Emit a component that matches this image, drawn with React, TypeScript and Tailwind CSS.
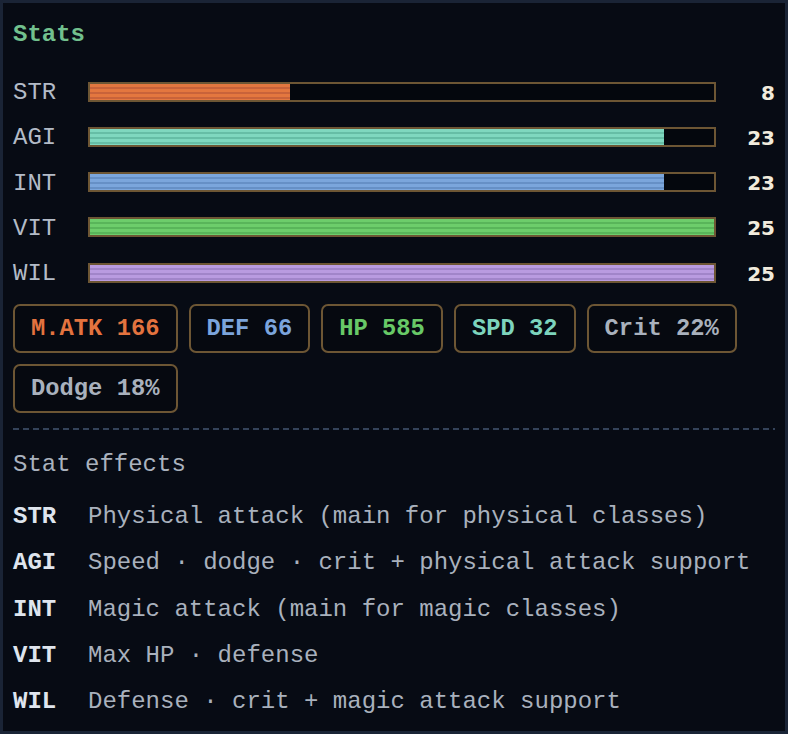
import React from "react";

const mono = { fontFamily: '"Courier New", "Liberation Mono", monospace' };

type Stat = { k: string; v: number; fill: string };

const stats: Stat[] = [
  { k: "STR", v: 8, fill: "bg-[repeating-linear-gradient(to_bottom,#e3773f_0px,#e3773f_3px,#c8633a_3px,#c8633a_5px)]" },
  { k: "AGI", v: 23, fill: "bg-[repeating-linear-gradient(to_bottom,#7fd8bf_0px,#7fd8bf_3px,#66bea6_3px,#66bea6_5px)]" },
  { k: "INT", v: 23, fill: "bg-[repeating-linear-gradient(to_bottom,#7ba6dc_0px,#7ba6dc_3px,#6690c6_3px,#6690c6_5px)]" },
  { k: "VIT", v: 25, fill: "bg-[repeating-linear-gradient(to_bottom,#6dcd6b_0px,#6dcd6b_3px,#59b55a_3px,#59b55a_5px)]" },
  { k: "WIL", v: 25, fill: "bg-[repeating-linear-gradient(to_bottom,#b99be0_0px,#b99be0_3px,#a185c9_3px,#a185c9_5px)]" },
];

const badges = [
  { t: "M.ATK 166", c: "text-[#e3733f]" },
  { t: "DEF 66", c: "text-[#7ba4dc]" },
  { t: "HP 585", c: "text-[#68c967]" },
  { t: "SPD 32", c: "text-[#7dd4bd]" },
  { t: "Crit 22%", c: "text-[#a9b1bd]" },
  { t: "Dodge 18%", c: "text-[#a9b1bd]" },
];

const effects = [
  { k: "STR", d: "Physical attack (main for physical classes)" },
  { k: "AGI", d: "Speed · dodge · crit + physical attack support" },
  { k: "INT", d: "Magic attack (main for magic classes)" },
  { k: "VIT", d: "Max HP · defense" },
  { k: "WIL", d: "Defense · crit + magic attack support" },
];

export default function App() {
  return (
    <div
      className="w-[788px] h-[734px] border-[3px] border-[#1a2436] bg-[#070b14] px-[10px] pt-[17px] overflow-hidden"
      style={mono}
    >
      <div className="h-[30px] leading-[30px] text-[24px] font-bold text-[#72c08e]">Stats</div>

      <div className="mt-[30px] flex flex-col gap-[25.25px]">
        {stats.map((s) => (
          <div key={s.k} className="grid grid-cols-[75px_1fr_59px] items-center h-[20px]">
            <div className="text-[24px] leading-[20px] pt-[3px] text-[#b3bbc7]">{s.k}</div>
            <div className="h-[20px] border-2 border-[#6d5634] bg-[#04070d]">
              <div className={`h-full ${s.fill}`} style={{ width: `${(s.v / 25) * 100}%` }} />
            </div>
            <div
              className="text-right text-[20px] font-bold leading-[20px] pt-[2px] text-[#f1ebdc]"
              style={{ fontFamily: '"DejaVu Sans", Verdana, sans-serif' }}
            >
              {s.v}
            </div>
          </div>
        ))}
      </div>

      <div className="mt-[23px] flex flex-wrap gap-[11px]">
        {badges.map((b) => (
          <div
            key={b.t}
            className={`h-[49px] px-4 border-2 border-[#6d5634] rounded-[7px] bg-[#060910] flex items-center text-[23.8px] font-bold whitespace-pre ${b.c}`}
          >
            {b.t}
          </div>
        ))}
      </div>

      <div className="mt-[15px] h-[2px] bg-[repeating-linear-gradient(to_right,#34435a_0px,#34435a_6px,transparent_6px,transparent_10px)]" />

      <div className="mt-[20px] h-[30px] leading-[30px] text-[24px] text-[#aab2be]">Stat effects</div>

      <div className="mt-[22px] flex flex-col gap-[16.25px]">
        {effects.map((e) => (
          <div key={e.k} className="flex h-[30px] items-center text-[24px] leading-[30px] whitespace-pre">
            <div className="w-[75px] shrink-0 font-bold text-[#dfe5ee]">{e.k}</div>
            <div className="text-[#a9b1bd]">{e.d}</div>
          </div>
        ))}
      </div>
    </div>
  );
}
